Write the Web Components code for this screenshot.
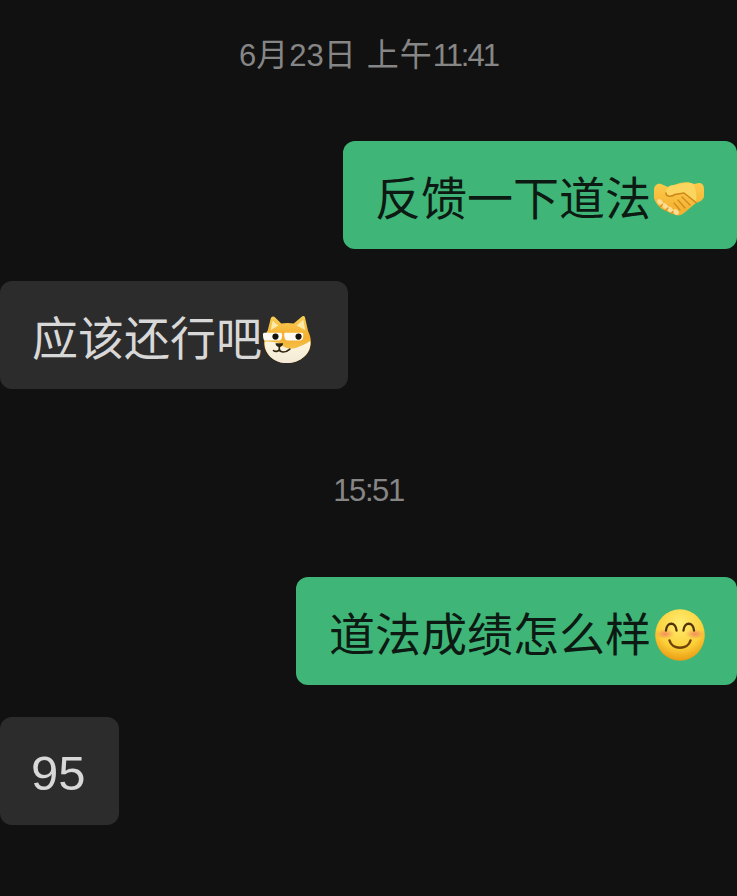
<!DOCTYPE html>
<html lang="zh">
<head>
<meta charset="utf-8">
<title>Chat</title>
<style>
  html, body { margin: 0; background: #111111; }
  .zh { font-size: 32px; letter-spacing: 1px; }
  .tight { letter-spacing: -2px; }
  .snug { letter-spacing: -1.4px; }
</style>
</head>
<body>
<chat-thread>
  <chat-time style="--top: 35px">6<span class="zh">月</span>23<span class="zh">日 上午</span><span class="tight">11:41</span></chat-time>
  <chat-bubble side="right" style="--top: 66px">反馈一下道法<chat-emoji kind="shake"></chat-emoji></chat-bubble>
  <chat-bubble side="left" style="--top: 32px">应该还行吧<chat-emoji kind="doge"></chat-emoji></chat-bubble>
  <chat-time style="--top: 82px"><span class="snug">15:51</span></chat-time>
  <chat-bubble side="right" style="--top: 66px; --pad-left: 33px">道法成绩怎么样<chat-emoji kind="smile"></chat-emoji></chat-bubble>
  <chat-bubble side="left" style="--top: 32px; --size: 49px; --pad-left: 31px; --pad-right: 33px; --pad-top: 4px">95</chat-bubble>
</chat-thread>
<script>
const FONT = `"Liberation Sans", "Noto Sans CJK SC", sans-serif`

class ChatThread extends HTMLElement {
  connectedCallback () {
    this.attachShadow({ mode: 'open' })
    this.shadowRoot.innerHTML = `
    <style>
    :host {
      display: flex;
      flex-direction: column;
      height: 896px;
      overflow: hidden;
      background: #111111;
      font-family: ${FONT};
    }
    </style>
    <slot></slot>`
  }
}

class ChatTime extends HTMLElement {
  connectedCallback () {
    this.attachShadow({ mode: 'open' })
    this.shadowRoot.innerHTML = `
    <style>
    :host {
      display: block;
      margin-top: var(--top, 0);
      height: 40px;
      line-height: 40px;
      text-align: center;
      font-size: 31px;
      color: #868686;
    }
    </style>
    <slot></slot>`
  }
}

class ChatBubble extends HTMLElement {
  connectedCallback () {
    this.attachShadow({ mode: 'open' })
    this.shadowRoot.innerHTML = `
    <style>
    :host {
      display: flex;
      align-items: center;
      box-sizing: border-box;
      width: fit-content;
      height: 108px;
      margin-top: var(--top, 0);
      padding: var(--pad-top, 8px) var(--pad-right, 32px) 0 var(--pad-left, 32px);
      font-size: var(--size, 46px);
      line-height: 54px;
      white-space: nowrap;
      border-radius: 12px;
    }
    :host([side="left"]) {
      align-self: flex-start;
      background: #2c2c2c;
      color: #d8d8d8;
    }
    :host([side="right"]) {
      align-self: flex-end;
      background: #3fb677;
      color: #0c1a13;
    }
    </style>
    <slot></slot>`
  }
}

const EMOJI = {
  shake: `
    <svg viewBox="0 0 52 34" width="52" height="34">
      <defs>
        <linearGradient id="h" x1="0" y1="0" x2="0" y2="1">
          <stop offset="0" stop-color="#fbcb4c"/>
          <stop offset="1" stop-color="#f4ae2c"/>
        </linearGradient>
      </defs>
      <path d="M1 8C1 4 4 1 8 2L15 5L27 1C33 0 37 0 41 2L46 1C49 1 51 3 51 7L51 15C50 18 47 20 43 21L31 31C28 34 24 34 20 32L9 27C5 24 2 20 1 16Z" fill="url(#h)"/>
      <path d="M13 11C13 6 16 3 21 3L31 1.500C35 1 38 1 41 3C43 8 44 15 43 20L31 11L22 12.500C18 15 13 15 13 11Z" fill="#fcd55f"/>
      <path d="M13 11C13 15 18 15 22 12.500L31 11L43 20.500" fill="none" stroke="#cc861c" stroke-width="1.500" stroke-linecap="round"/>
      <path d="M29 15L37 23M25 18L32 26M21 21L27 28" fill="none" stroke="#d08c22" stroke-width="1.300" stroke-linecap="round"/>
      <g fill="#fbdd94">
        <ellipse cx="7" cy="20" rx="2.300" ry="3.300" transform="rotate(-45 7 20)"/>
        <ellipse cx="12" cy="24" rx="2.300" ry="3.500" transform="rotate(-45 12 24)"/>
        <ellipse cx="17" cy="27.500" rx="2.300" ry="3.500" transform="rotate(-45 17 27.500)"/>
        <ellipse cx="23" cy="30" rx="2.300" ry="3.300" transform="rotate(-45 23 30)"/>
      </g>
      <path d="M9.500 22.500L7 25M15 26L12.500 28.500M20 29.500L18 31.500" stroke="#e08a20" stroke-width="1.200" stroke-linecap="round"/>
    </svg>`,
  doge: `
    <svg viewBox="0 0 52 52" width="50" height="50">
      <defs>
        <linearGradient id="d" x1="0" y1="0" x2="0" y2="1">
          <stop offset="0" stop-color="#f9cf56"/>
          <stop offset=".45" stop-color="#f3ae2e"/>
          <stop offset=".7" stop-color="#f5c04a"/>
        </linearGradient>
        <linearGradient id="w" x1="0" y1="0" x2="0" y2="1">
          <stop offset="0" stop-color="#fff7e2"/>
          <stop offset="1" stop-color="#f3e9d6"/>
        </linearGradient>
      </defs>
      <path d="M6 17L9 5C10 2 12 2 14 4L20 10C24 9 29 9 33 10L41 3C43 1 45 2 45 5L48 18C51 24 52 31 49 38C45 46 36 51 26 51C16 51 8 46 4 38C1 31 2 23 6 17Z" fill="url(#d)"/>
      <path d="M11 7L17 12L9 17ZM43 6L36 12L45 17Z" fill="#fde9a8"/>
      <path d="M3 29C8 28 14 30 18 30C22 36 30 37 36 35C41 33 46 31 50 28C52 39 41 51 26 51C12 51 2 41 3 29Z" fill="url(#w)"/>
      <path d="M1 21C1 20 2 19.500 3 19.500H19C20.500 19.500 21 21 21 22C21 25 20 27.500 18 27.500H3C1.500 27.500 1 24 1 21Z" fill="#fdfbf2"/>
      <path d="M23 21C23 20 24 19.500 25 19.500H41C42.500 19.500 43 20.500 43 22C43 25 42 27.500 40 27.500H26C24 27.500 23 24 23 21Z" fill="#fdfbf2"/>
      <circle cx="14" cy="23.500" r="3.200" fill="#14110b"/>
      <circle cx="38" cy="23.500" r="3.200" fill="#14110b"/>
      <path d="M14 30.500H22C22 33 20 34.500 18 34.500C16 34.500 14 33 14 30.500Z" fill="#2d2411"/>
      <path d="M18 34.500V36.500C18 40 24 41 29 36.500M18 37C17 39 14 39.500 12 38" fill="none" stroke="#2d2411" stroke-width="1.700" stroke-linecap="round"/>
    </svg>`,
  smile: `
    <svg viewBox="0 0 50 52" width="50" height="52">
      <defs>
        <radialGradient id="f" cx="50%" cy="28%" r="75%">
          <stop offset="0" stop-color="#ffec72"/>
          <stop offset=".62" stop-color="#fcd13a"/>
          <stop offset="1" stop-color="#e9950f"/>
        </radialGradient>
        <radialGradient id="b">
          <stop offset="0" stop-color="#f28a5e" stop-opacity=".95"/>
          <stop offset="1" stop-color="#f28a5e" stop-opacity="0"/>
        </radialGradient>
      </defs>
      <ellipse cx="25" cy="26" rx="24.800" ry="25.800" fill="url(#f)"/>
      <ellipse cx="10" cy="25" rx="9.500" ry="5" fill="url(#b)"/>
      <ellipse cx="40" cy="25" rx="9.500" ry="5" fill="url(#b)"/>
      <path d="M11 21.500C11.500 12.500 21 12.500 21.500 21.500M28.500 21.500C29 12.500 38.500 12.500 39 21.500" fill="none" stroke="#4f3208" stroke-width="2.300" stroke-linecap="round"/>
      <path d="M14.500 31.500C17 41 33 41 35.500 31.500" fill="none" stroke="#6e4308" stroke-width="2.500" stroke-linecap="round"/>
    </svg>`
}

class ChatEmoji extends HTMLElement {
  connectedCallback () {
    this.attachShadow({ mode: 'open' })
    this.shadowRoot.innerHTML = `
    <style>
    :host { display: inline-flex; align-items: center; justify-content: flex-end; flex: none; width: 54px; height: 54px; }
    :host([kind="doge"]) { justify-content: flex-start; }
    svg { display: block; }
    </style>
    ${EMOJI[this.getAttribute('kind')]}`
  }
}

window.customElements.define('chat-thread', ChatThread)
window.customElements.define('chat-time', ChatTime)
window.customElements.define('chat-bubble', ChatBubble)
window.customElements.define('chat-emoji', ChatEmoji)
</script>
</body>
</html>
